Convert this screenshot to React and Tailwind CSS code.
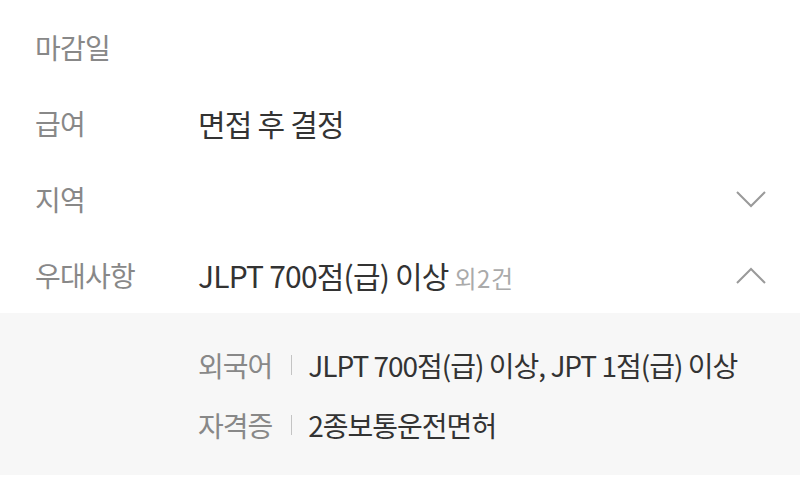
import React from 'react';

const font = { fontFamily: '"Noto Sans CJK KR", "Noto Sans", sans-serif' };

function Chevron({ up }) {
  return (
    <svg width="30" height="17" viewBox="0 0 30 17" fill="none" className="text-[#9a9a9a]">
      <path
        d={up ? 'M1 16 L15 2 L29 16' : 'M1 1 L15 15 L29 1'}
        stroke="currentColor"
        strokeWidth="2"
      />
    </svg>
  );
}

function Row({ label, children, right }) {
  return (
    <div className="flex items-center h-[76px] px-[35px]">
      <div className="w-[163px] shrink-0 text-[#888] text-[28px] tracking-[-0.8px]">{label}</div>
      <div className="flex-1 text-[#333] text-[30px] tracking-[-0.8px]">{children}</div>
      {right}
    </div>
  );
}

function SubRow({ label, value }) {
  return (
    <div className="flex items-center h-[60px] text-[28px] tracking-[-1px]">
      <span className="text-[#888]">{label}</span>
      <span className="ml-[19px] mr-[16px] w-px h-[20px] bg-[#c4c4c4]" />
      <span className="text-[#333]">{value}</span>
    </div>
  );
}

export default function App() {
  return (
    <div className="w-[800px] h-[485px] bg-white overflow-hidden pt-[9px]" style={font}>
      <Row label="마감일" />
      <Row label="급여">면접 후 결정</Row>
      <Row label="지역" right={<div className="mr-[-1px]"><Chevron /></div>} />
      <Row label="우대사항" right={<div className="mr-[-1px]"><Chevron up /></div>}>
        JLPT 700점(급) 이상 <span className="text-[#aaa] text-[24px] tracking-[0.5px]">외2건</span>
      </Row>
      <div className="bg-[#f7f7f7] pt-[22px] pb-[20px] pl-[198px]">
        <SubRow label="외국어" value="JLPT 700점(급) 이상, JPT 1점(급) 이상" />
        <SubRow label="자격증" value="2종보통운전면허" />
      </div>
    </div>
  );
}
